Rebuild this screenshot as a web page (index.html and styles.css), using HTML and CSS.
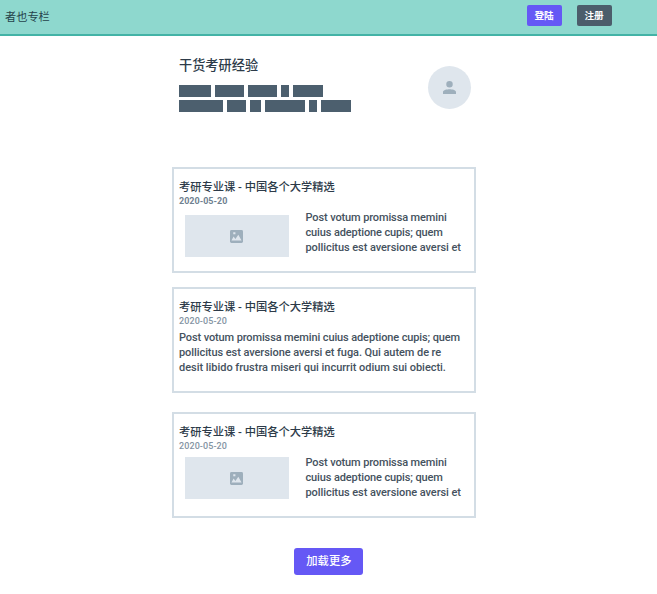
FILE: index.html
```html
<!DOCTYPE html>
<html lang="zh-CN">
<head>
<meta charset="utf-8">
<title>者也专栏</title>
<link rel="stylesheet" href="styles.css">
</head>
<body>
<svg class="defs" width="0" height="0">
  <symbol id="image" viewBox="3 3 18 18"><path fill="currentColor" d="M21 19V5a2 2 0 0 0-2-2H5a2 2 0 0 0-2 2v14a2 2 0 0 0 2 2h14a2 2 0 0 0 2-2z"/><path fill="#dfe6ed" d="M5 17.500l3-5.500 2.500 3.500 4-6 4.500 8zM7.500 6h3v3h-3z"/></symbol>
</svg>
<header class="topbar">
  <a class="brand">者也专栏</a>
  <nav class="actions"><button class="btn primary">登陆</button><button class="btn dark">注册</button></nav>
</header>
<main class="column">
  <section class="intro">
    <div>
      <h1>干货考研经验</h1>
      <div class="bars"><i class="w32"></i><i class="w29"></i><i class="w30"></i><i class="w8"></i><i class="w30"></i></div>
      <div class="bars"><i class="w44"></i><i class="w19"></i><i class="w11"></i><i class="w41"></i><i class="w8"></i><i class="w30"></i></div>
    </div>
    <div class="avatar"><svg viewBox="4 4 16 16"><path fill="currentColor" d="M12 12a4 4 0 1 0 0-8 4 4 0 0 0 0 8zm0 2c-2.700 0-8 .8-8 3.500v2.500h16v-2.500c0-2.700-5.300-3.500-8-3.500z"/></svg></div>
  </section>
  <article class="card">
    <h2>考研专业课 - 中国各个大学精选</h2>
    <time class="strong">2020-05-20</time>
    <div class="media">
      <div class="thumb low"><svg><use href="#image"/></svg></div>
      <p><span class="tight">Post votum promissa memini</span><br><span class="tight">cuius adeptione cupis; quem</span><br>pollicitus est aversione aversi et</p>
    </div>
  </article>
  <article class="card second">
    <h2>考研专业课 - 中国各个大学精选</h2>
    <time>2020-05-20</time>
    <p><span class="tight">Post votum promissa memini cuius adeptione cupis; quem</span><br>pollicitus est aversione aversi et fuga. Qui autem de re<br><span class="loose">desit libido frustra miseri qui incurrit odium sui obiecti.</span></p>
  </article>
  <article class="card third">
    <h2>考研专业课 - 中国各个大学精选</h2>
    <time>2020-05-20</time>
    <div class="media">
      <div class="thumb"><svg><use href="#image"/></svg></div>
      <p><span class="tight">Post votum promissa memini</span><br><span class="tight">cuius adeptione cupis; quem</span><br>pollicitus est aversione aversi et</p>
    </div>
  </article>
  <button class="btn primary more">加载更多</button>
</main>
</body>
</html>
```
FILE: styles.css
```css
* { box-sizing: border-box; }
body { margin: 0; background: #fff; color: #2d3b49; font-family: Roboto, "Noto Sans CJK SC", sans-serif; }
.defs { display: none; }
h1, h2, p { margin: 0; font-weight: 400; white-space: nowrap; }
.topbar { height: 36px; background: #8ed8ce; border-bottom: 2px solid #43b3a6; display: flex; justify-content: space-between; }
.brand { padding: 10px 0 0 5px; font-size: 11.200px; line-height: 16px; color: #25414a; }
.actions { display: flex; gap: 15px; padding: 5px 45px 0 0; }
.btn { border: 0; padding: 0; height: 21px; width: 35px; border-radius: 2px; color: #fff; font: 700 9.600px/20px Roboto, "Noto Sans CJK SC", sans-serif; }
.primary { background: #6558f5; }
.dark { background: #4c5d6b; }
.actions .btn { text-indent: -1px; }
.column { width: 304px; margin-left: 172.400px; }
.intro { height: 131px; padding: 20px 5px 0 6.600px; display: flex; justify-content: space-between; }
h1 { font-size: 13.200px; line-height: 20px; margin-bottom: 9px; font-weight: 500; }
.bars { display: flex; gap: 4px; margin-bottom: 3px; }
.bars i { height: 12px; background: #4c5f6e; }
.w32 { width: 32px; }
.w29 { width: 29px; }
.w30 { width: 29.500px; }
.w8 { width: 8px; }
.w44 { width: 44px; }
.w19 { width: 19px; }
.w11 { width: 11px; }
.w41 { width: 40.500px; }
.avatar { width: 43px; height: 43px; margin-top: 10px; border-radius: 50%; background: #dfe6ed; color: #9eafbc; display: flex; align-items: center; justify-content: center; }
.avatar svg { width: 13px; height: 13px; }
.card { height: 106px; border: 2px solid #d3dde5; padding: 11px 0 0 4.600px; display: flow-root; }
.second { margin-top: 14px; }
.third { margin-top: 19px; }
h2 { font-size: 11.250px; line-height: 16px; font-weight: 500; }
time { display: block; font-size: 9px; line-height: 11px; font-weight: 500; color: #8494a3; letter-spacing: .1px; }
.strong { color: #6f8190; font-weight: 700; letter-spacing: 0; }
p { font-size: 11px; line-height: 15px; font-weight: 500; letter-spacing: -.07px; margin-top: 3px; color: #45525e; }
.tight { letter-spacing: -.12px; }
.loose { letter-spacing: -.03px; }
.media { display: flex; gap: 16.500px; padding-left: 6px; }
.thumb { width: 104px; height: 42px; margin-top: 5px; background: #dfe6ed; color: #9eafbc; display: flex; align-items: center; justify-content: center; }
.thumb.low { margin-top: 8px; }
.thumb svg { width: 13px; height: 13px; }
.more { display: block; width: 69px; height: 27px; margin: 30px 0 0 122px; border-radius: 3px; font-size: 11.300px; line-height: 26px; font-weight: 500; padding-top: 1px; }
```
